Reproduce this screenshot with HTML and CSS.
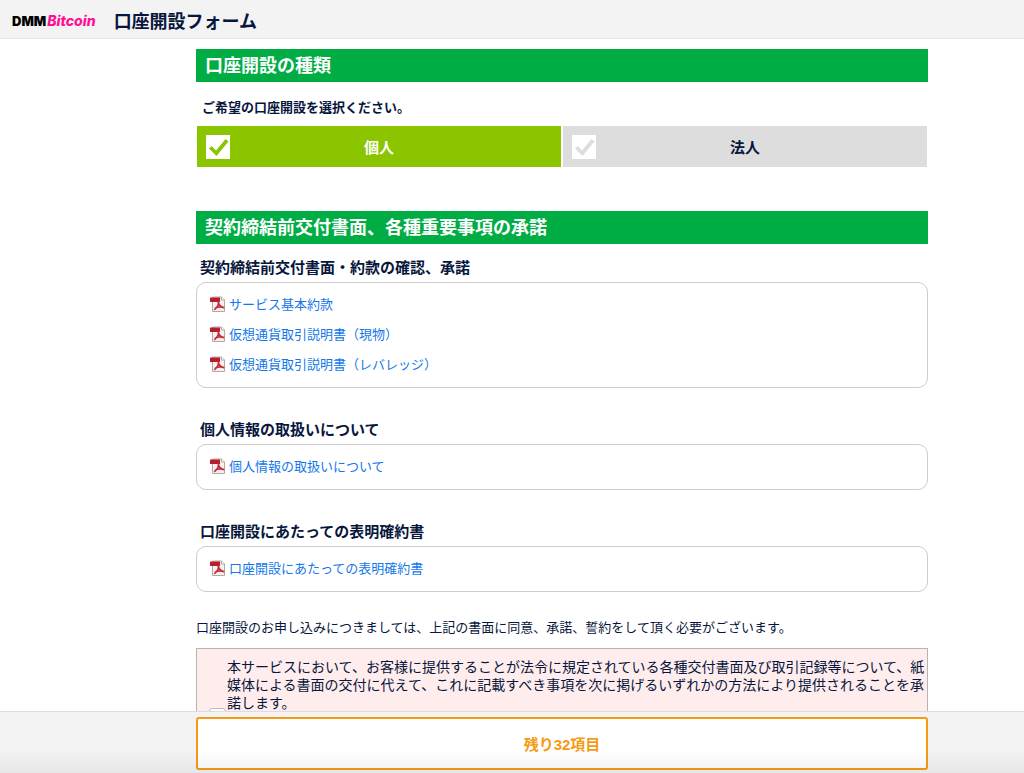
FILE: index.html
```html
<!DOCTYPE html>
<html lang="ja">
<head>
    <meta charset="UTF-8">
    <meta name="viewport" content="width=device-width, initial-scale=1.0">
    <title>口座開設フォーム</title>
    <link rel="stylesheet" href="styles.css">
</head>
<body>
    <svg width="0" height="0" class="defs" aria-hidden="true">
        <symbol id="pdf" viewBox="0 0 16 16">
            <path d="M2.500 1h9l3 3v11.500h-12z" fill="#f6f0f0" stroke="#b9a5a5"/>
            <path d="M11.500 1v3h3" fill="#fff" stroke="#b9a5a5"/>
            <path d="M0 1.500h10v4.500H0z" fill="#b81f2d"/>
            <path d="M8.200 5c1 3 .2 5.500-4 8.800M8.300 6c.5 3.200 2.500 5.300 6 5.700M5 12.200c2.800-1.300 5.500-1.600 9-.7" fill="none" stroke="#c02c38" stroke-width="1.700"/>
        </symbol>
        <symbol id="check" viewBox="0 0 24 24">
            <path d="M3 13.500l2.500-2.500 4.500 4.500L19.500 4l3 2.500L10.500 21z" fill="currentColor"/>
        </symbol>
    </svg>

    <header class="header">
        <div class="logo"><span class="logo-dmm">DMM</span><span class="logo-bitcoin">Bitcoin</span></div>
        <h1 class="title">口座開設フォーム</h1>
    </header>

    <main class="main">
        <form id="account">
            <h2 class="heading">口座開設の種類</h2>
            <fieldset class="kind">
                <legend class="kind-label">ご希望の口座開設を選択ください。</legend>
                <div class="kind-list">
                    <label class="kind-item">
                        <span class="tick"><input type="radio" name="kind" checked><svg><use href="#check"/></svg></span>
                        <span class="kind-name">個人</span>
                    </label>
                    <label class="kind-item">
                        <span class="tick"><input type="radio" name="kind"><svg><use href="#check"/></svg></span>
                        <span class="kind-name">法人</span>
                    </label>
                </div>
            </fieldset>

            <h2 class="heading">契約締結前交付書面、各種重要事項の承諾</h2>
            <section class="docs">
                <h3 class="sub">契約締結前交付書面・約款の確認、承諾</h3>
                <ul class="box">
                    <li><a href="#"><svg class="pdf"><use href="#pdf"/></svg>サービス基本約款</a></li>
                    <li><a href="#"><svg class="pdf"><use href="#pdf"/></svg>仮想通貨取引説明書（現物）</a></li>
                    <li><a href="#"><svg class="pdf"><use href="#pdf"/></svg>仮想通貨取引説明書（レバレッジ）</a></li>
                </ul>
            </section>
            <section class="docs">
                <h3 class="sub">個人情報の取扱いについて</h3>
                <ul class="box">
                    <li><a href="#"><svg class="pdf"><use href="#pdf"/></svg>個人情報の取扱いについて</a></li>
                </ul>
            </section>
            <section class="docs">
                <h3 class="sub">口座開設にあたっての表明確約書</h3>
                <ul class="box">
                    <li><a href="#"><svg class="pdf"><use href="#pdf"/></svg>口座開設にあたっての表明確約書</a></li>
                </ul>
            </section>

            <p class="note">口座開設のお申し込みにつきましては、上記の書面に同意、承諾、誓約をして頂く必要がございます。</p>
            <div class="agree">
                <input type="checkbox" id="agree1" class="agree-check">
                <label for="agree1" class="agree-text">本サービスにおいて、お客様に提供することが法令に規定されている各種交付書面及び取引記録等について、紙媒体による書面の交付に代えて、これに記載すべき事項を次に掲げるいずれかの方法により提供されることを承諾します。</label>
            </div>
        </form>
    </main>

    <footer class="footer">
        <button type="submit" form="account" class="remain">残り32項目</button>
    </footer>
</body>
</html>
```

FILE: styles.css
```css
* { box-sizing: border-box; }
body { margin: 0; height: 100vh; display: flex; flex-direction: column; background: #fff; color: #07163c; font-family: "Liberation Sans", "Noto Sans CJK JP", sans-serif; font-size: 13px; }
h1, h2, h3, p, ul, fieldset { margin: 0; padding: 0; }
.defs { position: absolute; }

/* header */
.header { flex: none; display: flex; align-items: center; height: 39px; padding: 3px 12px 0; gap: 18px; background: #f3f3f3; border-bottom: 1px solid #e2e2e2; }
.logo { display: flex; align-items: center; gap: 1px; line-height: 16px; }
.logo-dmm { font-family: Inter, sans-serif; font-size: 13px; font-weight: 900; color: #000; }
.logo-bitcoin { font-family: Inter, sans-serif; font-size: 14px; font-weight: 800; font-style: italic; color: #ff0f96; }
.title { padding-top: 2px; font-size: 18px; line-height: 24px; font-weight: 700; }

/* form */
.main { flex: 1; min-height: 0; overflow-y: auto; scrollbar-width: none; padding: 10px 96px 0 196px; }
.heading { height: 33px; padding-left: 9px; background: #00ad45; color: #fff; font-size: 18px; line-height: 35px; }
.kind { border: 0; margin-bottom: 44px; }
.kind-label { padding: 16px 0 8px 6px; font-weight: 700; line-height: 20px; }
.kind-list { display: grid; grid-template-columns: 1fr 1fr; gap: 2px; padding: 0 1px; }
.kind-item { display: flex; align-items: center; height: 41px; padding: 0 9px; background: #ddd; font-size: 15px; font-weight: 700; cursor: pointer; }
.kind-item:has(input:checked) { background: #8ac500; color: #fff; }
.kind-name { flex: 1; padding-right: 24px; text-align: center; }
.tick { display: grid; color: #ddd; }
.tick input, .tick svg { grid-area: 1 / 1; width: 24px; height: 24px; margin: 0; }
.tick input { appearance: none; background: #fff; }
.tick svg { pointer-events: none; }
.tick input:checked + svg { color: #8ac500; }

/* documents */
.docs { padding-top: 14px; margin-bottom: 18px; }
.sub { padding-left: 4px; font-size: 15px; line-height: 20px; margin-bottom: 4px; }
.docs + .docs { margin-top: 32px; padding-top: 0; }
.box { list-style: none; padding: 7px 13px; border: 1px solid #ccc; border-radius: 10px; }
.box a { display: flex; align-items: center; gap: 3px; height: 30px; padding-bottom: 3px; color: #1377ea; text-decoration: none; }
.pdf { width: 16px; height: 16px; }

/* agreement */
.note { margin-top: 26px; line-height: 20px; }
.agree { display: flex; align-items: center; min-height: 136px; margin-top: 10px; background: #ffeded; border: 1px solid #b5b5b5; }
.agree-check { flex: none; appearance: none; width: 17px; height: 17px; margin: 0 0 0 12px; background: #fff; border: 1px solid #bbb; border-radius: 3px; }
.agree-text { align-self: flex-start; padding-top: 9px; margin-left: 1px; font-size: 14px; line-height: 18px; }

/* footer */
.footer { position: relative; flex: none; padding: 5px 96px 3px 196px; background: #f3f3f3; border-top: 1px solid #ddd; }
.footer::after { content: ""; position: absolute; left: 0; right: 0; bottom: 0; height: 24px; background: linear-gradient(rgba(0, 0, 0, 0), rgba(0, 0, 0, .05)); pointer-events: none; }
.remain { display: block; width: 100%; height: 53px; background: #fff; border: 2px solid #f59a12; border-radius: 3px; color: #f59a12; font: inherit; font-size: 15px; font-weight: 700; cursor: pointer; }
```
